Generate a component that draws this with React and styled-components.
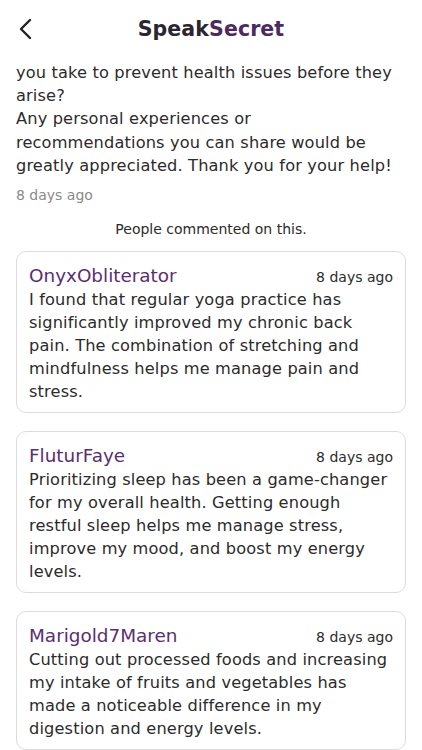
import React from "react";
import styled, { createGlobalStyle } from "styled-components";

const Global = createGlobalStyle`
  html, body { margin: 0; padding: 0; background: #fff; }
  body { font-family: "DejaVu Sans", "Noto Sans", sans-serif; color: #2b2b2b; }
`;

const Page = styled.div`
  width: 422px;
  height: 750px;
  overflow: hidden;
  display: flex;
  flex-direction: column;
`;

const Header = styled.header`
  height: 58px;
  flex-shrink: 0;
  display: grid;
  grid-template-columns: 60px 1fr 60px;
  align-items: center;
  background: #fff;
`;

const Back = styled.button`
  border: none;
  background: none;
  padding: 0 0 0 18px;
  display: flex;
  align-items: center;
  height: 100%;
`;

const Title = styled.h1`
  margin: 0;
  text-align: center;
  font-size: 20.5px;
  font-weight: 700;
  color: #2a2630;
  letter-spacing: 0.1px;
`;

const Accent = styled.span`
  color: #4b2a5f;
`;

const Content = styled.main`
  padding: 3px 16px 0;
  display: flex;
  flex-direction: column;
`;

const Lines = styled.p`
  margin: ${(p) => p.$top || 0} 0 0;
  font-size: 16.2px;
  letter-spacing: 0.15px;
  line-height: ${(p) => p.$lh || "23.2px"};
  color: #2b2b2b;
  white-space: nowrap;
`;

const Line = styled.span`
  display: block;
`;

const Meta = styled.div`
  margin-top: 10px;
  font-size: 14px;
  color: #8a8a8a;
`;

const Caption = styled.div`
  margin: 18px 0 14px;
  text-align: center;
  font-size: 14px;
  color: #2b2b2b;
`;

const List = styled.div`
  display: flex;
  flex-direction: column;
  gap: 18px;
`;

const Card = styled.div`
  border: 1px solid #dcdcdc;
  border-radius: 10px;
  padding: 13px 12px 9px 12px;
`;

const CardHead = styled.div`
  display: flex;
  justify-content: space-between;
  align-items: baseline;
`;

const Name = styled.span`
  font-size: 18.4px;
  color: #5a2e70;
`;

const Time = styled.span`
  font-size: 14px;
  color: #2b2b2b;
`;

const post = [
  "you take to prevent health issues before they",
  "arise?",
  "Any personal experiences or",
  "recommendations you can share would be",
  "greatly appreciated. Thank you for your help!",
];

const comments = [
  {
    name: "OnyxObliterator",
    lines: [
      "I found that regular yoga practice has",
      "significantly improved my chronic back",
      "pain. The combination of stretching and",
      "mindfulness helps me manage pain and",
      "stress.",
    ],
  },
  {
    name: "FluturFaye",
    lines: [
      "Prioritizing sleep has been a game-changer",
      "for my overall health. Getting enough",
      "restful sleep helps me manage stress,",
      "improve my mood, and boost my energy",
      "levels.",
    ],
  },
  {
    name: "Marigold7Maren",
    lines: [
      "Cutting out processed foods and increasing",
      "my intake of fruits and vegetables has",
      "made a noticeable difference in my",
      "digestion and energy levels.",
    ],
  },
];

export default function App() {
  return (
    <Page>
      <Global />
      <Header>
        <Back aria-label="Back">
          <svg width="16" height="22" viewBox="0 0 16 22" fill="none">
            <path d="M12 2 L3 11 L12 20" stroke="#222" strokeWidth="2.4" strokeLinecap="round" strokeLinejoin="round" />
          </svg>
        </Back>
        <Title>
          Speak<Accent>Secret</Accent>
        </Title>
        <div />
      </Header>
      <Content>
        <Lines>
          {post.map((l) => (
            <Line key={l}>{l}</Line>
          ))}
        </Lines>
        <Meta>8 days ago</Meta>
        <Caption>People commented on this.</Caption>
        <List>
          {comments.map((c) => (
            <Card key={c.name}>
              <CardHead>
                <Name>{c.name}</Name>
                <Time>8 days ago</Time>
              </CardHead>
              <Lines $top="2px" $lh="23px">
                {c.lines.map((l) => (
                  <Line key={l}>{l}</Line>
                ))}
              </Lines>
            </Card>
          ))}
        </List>
      </Content>
    </Page>
  );
}
